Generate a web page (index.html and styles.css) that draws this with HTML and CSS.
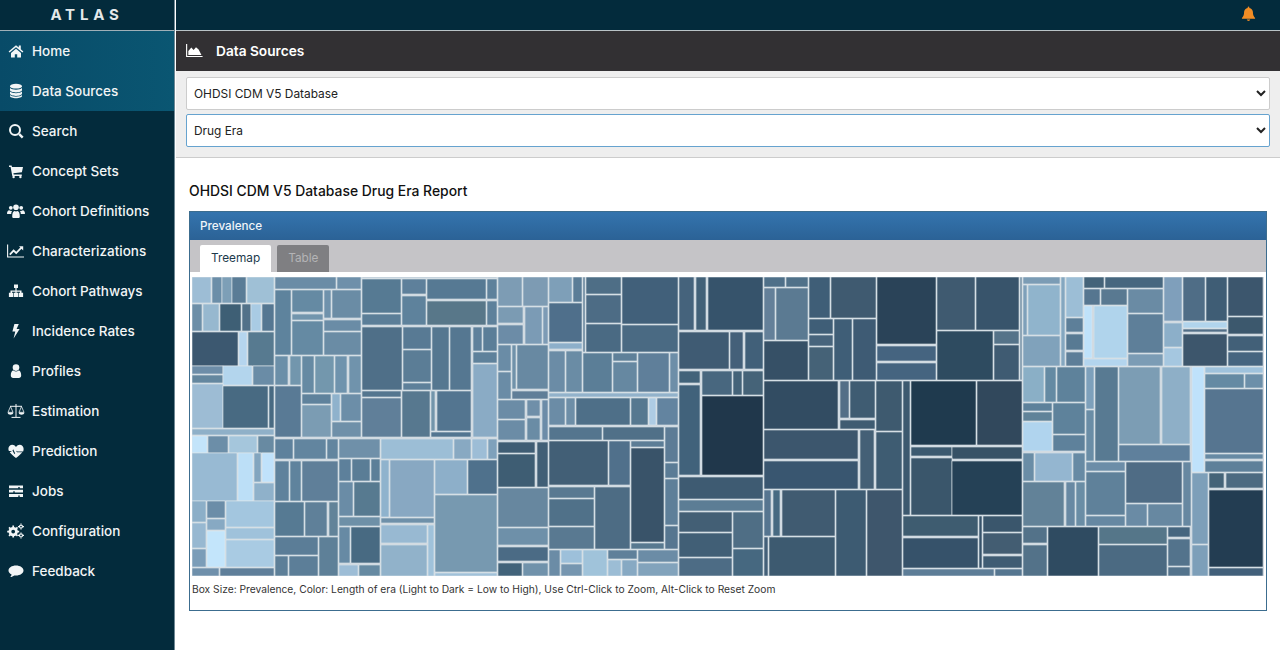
FILE: index.html
```html
<!DOCTYPE html>
<html lang="en">
<head>
    <meta charset="UTF-8">
    <meta name="viewport" content="width=device-width, initial-scale=1.0">
    <link rel="stylesheet" href="styles.css">
    <title>ATLAS</title>
</head>
<body>
    <aside class="sidebar">
        <div class="brand">ATLAS</div>
        <nav class="nav">
            <a class="nav-item active">
                <svg class="nav-icon" viewBox="0 0 16 16"><path d="M8 2.200 .6 8.400l1 1.100L8 4.200l6.400 5.300 1-1.100-2.600-2.200V2.600h-2v2zM3 10v4.600h3.800v-3.400h2.400v3.400H13V10L8 5.800z"/></svg>
                <span>Home</span>
            </a>
            <a class="nav-item active">
                <svg class="nav-icon" viewBox="0 0 16 16"><ellipse cx="8" cy="3.200" rx="6" ry="2.400"/><path d="M2 5v2c0 1.300 2.700 2.400 6 2.400s6-1.100 6-2.400V5c-1.200 1.200-3.500 1.700-6 1.700S3.200 6.200 2 5zM2 8.600v2c0 1.300 2.700 2.400 6 2.400s6-1.100 6-2.400v-2c-1.200 1.200-3.500 1.700-6 1.700s-4.800-.5-6-1.700zM2 12.100v1c0 1.300 2.700 2.200 6 2.200s6-.9 6-2.200v-1c-1.200 1.200-3.500 1.700-6 1.700s-4.800-.5-6-1.700z"/></svg>
                <span>Data Sources</span>
            </a>
            <a class="nav-item">
                <svg class="nav-icon" viewBox="0 0 16 16"><path class="line" d="M11.200 11.200 14.700 14.700" stroke-width="2.400"/><circle class="line" cx="7" cy="7" r="5" stroke-width="2"/></svg>
                <span>Search</span>
            </a>
            <a class="nav-item">
                <svg class="nav-icon" viewBox="0 0 16 16"><path d="M1 2.500h2.600l.4 1.500H15l-1.100 5.300-8.500 1 .3 1.200h8.100v1.400H4.300L2.600 3.900H1z"/><circle cx="5.600" cy="14" r="1.200"/><circle cx="12.400" cy="14" r="1.200"/></svg>
                <span>Concept Sets</span>
            </a>
            <a class="nav-item">
                <svg class="nav-icon nav-icon-wide" viewBox="0 0 18 16"><circle cx="3.800" cy="4.800" r="1.900"/><circle cx="14.200" cy="4.800" r="1.900"/><circle cx="9" cy="4.300" r="2.800"/><path d="M0 10.500c0-2 1-3.300 2.200-3.300.8.700 2.100.9 3 .5-.7 1-1 2-1 3.300H1.300C.500 11 0 10.900 0 10.500zM18 10.500c0-2-1-3.300-2.200-3.300-.8.700-2.100.9-3 .5.700 1 1 2 1 3.300h2.900c.8 0 1.300-.1 1.300-.5zM5.200 13.500c0-3.300.9-5.400 2.400-5.400.9.600 1.900.6 2.800 0 1.500 0 2.400 2.100 2.400 5.400 0 1-.7 1.500-1.500 1.500H6.700c-.8 0-1.500-.5-1.500-1.500z"/></svg>
                <span>Cohort Definitions</span>
            </a>
            <a class="nav-item">
                <svg class="nav-icon nav-icon-wide" viewBox="0 0 18 16"><path class="line" d="M.6 1.500V14h16.400" stroke-width="1.100"/><path class="line" d="M2.800 11.600 6.600 7.600l2.600 2.400 5.200-5.400" stroke-width="1.800"/><path d="M12 3.200h4.200v4.200z"/></svg>
                <span>Characterizations</span>
            </a>
            <a class="nav-item">
                <svg class="nav-icon" viewBox="0 0 16 16"><path d="M6 1.500h4v3.600H8.600v2.300h4.900v2.300h1.600v4.200H10.600V9.700H12v-1H8.600v1H10v4.200H6V9.700h1.400v-1H4v1h1.400v4.200H.9V9.700h1.600V7.400h4.900V5.100H6z"/></svg>
                <span>Cohort Pathways</span>
            </a>
            <a class="nav-item">
                <svg class="nav-icon" viewBox="0 0 16 16"><path d="M6.400 1h4.400L8.600 6h3l-6 9.400 1.700-7H4.400z"/></svg>
                <span>Incidence Rates</span>
            </a>
            <a class="nav-item">
                <svg class="nav-icon" viewBox="0 0 16 16"><circle cx="8" cy="4.600" r="3.300"/><path d="M2.800 12.600c0-3 .9-5 2.700-5 .7.600 1.600 1 2.500 1s1.800-.4 2.500-1c1.800 0 2.700 2 2.700 5 0 1.500-1 2.400-2.300 2.400H5.100c-1.300 0-2.300-.9-2.300-2.400z"/></svg>
                <span>Profiles</span>
            </a>
            <a class="nav-item">
                <svg class="nav-icon nav-icon-wide" viewBox="0 0 18 16"><path class="line" d="M9 1v13M4.500 14.400h9M3 3.300h12" stroke-width="1"/><path class="line" d="M3.500 3.500 1 9.300h5zM14.500 3.500 12 9.300h5z" stroke-width=".8"/><path d="M.6 9.600h5.800C6.200 11 5 11.800 3.500 11.800S.8 11 .6 9.600zM11.600 9.600h5.800c-.2 1.400-1.400 2.200-2.900 2.200s-2.700-.8-2.900-2.200z"/></svg>
                <span>Estimation</span>
            </a>
            <a class="nav-item">
                <svg class="nav-icon" viewBox="0 0 16 16"><path d="M8 4C6.900 2.500 5.700 1.800 4.400 1.800 2 1.800.4 3.500.4 5.800c0 .8.200 1.500.5 2.200h3.400l.9-1.800 2 4.200 1.500-2.700.6.900h5.800c.3-.7.500-1.400.5-2.800 0-2.300-1.600-4-4-4C10.300 1.800 9.100 2.500 8 4zM1.700 9.200C3.400 11.100 5.700 13.300 8 15c2.300-1.700 4.600-3.900 6.300-5.800H9.100l-.9-1.300-1.800 3.300-2-4-.4.800z"/></svg>
                <span>Prediction</span>
            </a>
            <a class="nav-item">
                <svg class="nav-icon" viewBox="0 0 16 16"><path d="M1 2.500h14v2.800h-3.300V3.900h-1.400v1.400H1zM1 6.800h14v2.800H6.700V8.200H5.300v1.400H1zM1 11.100h14v2.800h-3.300v-1.400h-1.400v1.400H1z"/></svg>
                <span>Jobs</span>
            </a>
            <a class="nav-item">
                <svg class="nav-icon nav-icon-wide" viewBox="0 0 18 16"><circle class="line" cx="6.200" cy="8.600" r="3.300" stroke-width="2.800"/><path class="line" d="M6.200 2.600v2.200M6.200 12.400v2.200M.2 8.600h2.200M10 8.600h2.200M2 4.400l1.500 1.500M9 11.400l1.500 1.500M2 12.800l1.500-1.500M9 5.800l1.500-1.500" stroke-width="1.700"/><circle class="line" cx="14" cy="3.600" r="1.500" stroke-width="1.200"/><circle class="line" cx="14" cy="12.400" r="1.500" stroke-width="1.200"/><path class="line" d="M14 .6v1M14 5.600v1M11 3.600h1M16 3.600h1M14 9.400v1M14 14.400v1M11 12.400h1M16 12.400h1" stroke-width="1.200"/></svg>
                <span>Configuration</span>
            </a>
            <a class="nav-item">
                <svg class="nav-icon" viewBox="0 0 16 16"><path d="M8 2.500c4.200 0 7.500 2.200 7.500 5s-3.300 5-7.500 5c-.6 0-1.200 0-1.700-.1-1 .9-2.500 1.500-4 1.700.7-.8 1.200-1.700 1.300-2.600C1.700 10.600.5 9.100.5 7.500c0-2.800 3.300-5 7.500-5z"/></svg>
                <span>Feedback</span>
            </a>
        </nav>
    </aside>

    <div class="main">
        <header class="topbar">
            <svg class="bell" viewBox="0 0 16 16"><path d="M8 .6c.5 0 .9.400.9.900v.5c2.300.4 3.800 2.200 3.800 4.500 0 3.200.8 4.900 2.300 6.300v.7H1v-.7C2.500 11.400 3.300 9.700 3.300 6.500c0-2.300 1.500-4.100 3.800-4.500v-.5c0-.5.400-.9.900-.9zM6.200 14.500h3.600C9.700 15.400 8.900 16 8 16s-1.700-.6-1.800-1.500z"/></svg>
        </header>

        <div class="page-title">
            <svg class="page-icon" viewBox="0 0 18 16"><path class="line" d="M.6 1v13.400h17" stroke-width="1.200"/><path d="M2.400 12.800V8.400L5.600 4.800 8 7.400l2.600-2.800 2.800 2.400 3 5.800z"/></svg>
            <span>Data Sources</span>
        </div>

        <div class="filters">
            <select class="picker">
                <option>OHDSI CDM V5 Database</option>
            </select>
            <select class="picker picker-focus">
                <option>Drug Era</option>
            </select>
        </div>

        <div class="report">
            <h2 class="report-title">OHDSI CDM V5 Database Drug Era Report</h2>
            <section class="panel">
                <div class="panel-heading">Prevalence</div>
                <div class="tabs">
                    <a class="tab tab-on">Treemap</a>
                    <a class="tab tab-off">Table</a>
                </div>
                <div class="panel-body">
                    <svg id="treemap" class="treemap" viewBox="192 277 1072 299"></svg>
                    <p class="legend">Box Size: Prevalence, Color: Length of era (Light to Dark = Low to High), Use Ctrl-Click to Zoom, Alt-Click to Reset Zoom</p>
                </div>
            </section>
        </div>
    </div>
    <script src="treemap.js"></script>
</body>
</html>
```

FILE: styles.css
```css
* {
    box-sizing: border-box;
}
html, body {
    height: 100%;
}
body {
    margin: 0;
    display: flex;
    overflow: hidden;
    font-family: Inter, "Liberation Sans", sans-serif;
    font-size: 14px;
    color: #111;
    background-color: white;
}
.line {
    fill: none;
    stroke: currentColor;
}

.sidebar {
    flex: 0 0 175px;
    height: 100%;
    background-color: #032b3c;
    border-right: 1px solid #6f8894;
}
.brand {
    height: 31px;
    line-height: 29px;
    text-align: center;
    color: #e4e8ea;
    font-size: 15px;
    font-weight: 700;
    letter-spacing: 4.8px;
    border-bottom: 1px solid #9fb0b8;
}
.nav-item {
    display: flex;
    align-items: center;
    height: 40px;
    padding: 0 0 0 8px;
    color: #f2f5f6;
    font-weight: 500;
    font-size: 13.5px;
}
.nav-item span {
    line-height: 18px;
    margin-bottom: 1px;
}
.nav-item.active {
    background-image: linear-gradient(to right, #084b68, #0a5672);
}
.nav-icon {
    width: 16px;
    height: 16px;
    margin-right: 8px;
    fill: currentColor;
}
.nav-icon-wide {
    width: 18px;
    margin-left: -1px;
    margin-right: 7px;
}

.main {
    flex: 1;
    min-width: 0;
    margin-left: 1px;
    display: flex;
    flex-direction: column;
}
.topbar {
    height: 31px;
    display: flex;
    align-items: center;
    justify-content: flex-end;
    padding-right: 24px;
    background-color: #032b3c;
    border-bottom: 1px solid #b9c3c7;
}
.bell {
    width: 15px;
    height: 15px;
    margin-top: -3px;
    fill: #f28d25;
}
.page-title {
    height: 40px;
    display: flex;
    align-items: center;
    padding: 0 0 1px 10px;
    background-color: #323033;
    color: white;
    font-weight: 600;
    font-size: 13.7px;
}
.page-icon {
    width: 17px;
    height: 15px;
    margin-right: 13px;
    color: white;
    fill: white;
}
.filters {
    display: flex;
    flex-direction: column;
    gap: 4px;
    height: 87px;
    padding: 6px 10px 0 10px;
    background-color: #eeeeee;
    border-bottom: 1px solid #cccccc;
}
.picker {
    width: 100%;
    height: 33px;
    padding: 0 3px;
    font-family: Inter, "Liberation Sans", sans-serif;
    font-size: 11.9px;
    color: #222;
    background-color: white;
    border: 1px solid #cccccc;
    border-radius: 2px;
}
.picker-focus {
    border-color: #66a3cf;
}

.report {
    padding: 0 13px;
}
.report-title {
    margin: 24px 0 11px 0;
    line-height: 18px;
    font-size: 13.9px;
    font-weight: 500;
}
.panel {
    height: 400px;
    border: 1px solid #3c6d8f;
}
.panel-heading {
    height: 28px;
    line-height: 28px;
    padding-left: 10px;
    color: #f0f5f9;
    font-size: 11.7px;
    font-weight: 500;
    background-image: linear-gradient(to bottom, #3474ae, #2b6296);
}
.tabs {
    display: flex;
    gap: 6px;
    height: 32px;
    padding: 5px 0 0 10px;
    background-color: #c5c4c7;
}
.tab {
    height: 27px;
    line-height: 27px;
    padding: 0 11px;
    font-size: 11.8px;
    border-radius: 2px 2px 0 0;
}
.tab-on {
    background-color: white;
    color: #1c3a4c;
}
.tab-off {
    background-color: #7f7f82;
    color: #b4b4b6;
}
.panel-body {
    padding: 5px 0 0 2px;
}
.treemap {
    display: block;
    width: 1072px;
    height: 299px;
    background-color: #ccd6de;
}
.treemap rect {
    stroke: #dfe6ec;
    stroke-width: .6;
}
.legend {
    margin: 7px 0 0 0;
    line-height: 12px;
    font-size: 10.25px;
    color: #333;
}
```

FILE: treemap.js
```js
// x0, y0, x1, y1, colour (page pixels, same as the svg viewBox)
let cells = [
    // first block
    [192,277,211,303,"#9dbdd5"],[212,277,222,303,"#6b8ea8"],[222,277,232,303,"#7d9fb7"],[232,277,246,303,"#5a7c96"],[247,277,274,303,"#9fc0d6"],
    [192,304,202,331,"#6d8fa8"],[203,304,219,331,"#97b8cf"],[220,304,241,331,"#3e5f75"],[242,304,251,331,"#527189"],[251,304,261,331,"#a9cbe4"],[262,304,274,331,"#557792"],
    [192,332,238,366,"#3c5870"],[239,332,247,366,"#b5d5ee"],[248,332,274,366,"#577a90"],
    [192,366,223,374,"#6d8da8"],[192,375,223,383,"#64879f"],[223,366,252,385,"#b3d5ed"],[253,366,274,385,"#6a8ca6"],
    [192,384,223,428,"#9dbcd4"],[223,386,268,428,"#486a82"],[269,386,274,428,"#486a82"],[192,429,274,435,"#8fb0c8"],
    [192,436,207,453,"#c3e4fa"],[208,436,228,453,"#6c8ea8"],[229,436,257,453,"#a5c6dc"],[258,436,274,453,"#688aa2"],
    [192,453,237,501,"#98bad3"],[238,453,253,501,"#bcdff7"],[254,453,261,482,"#82a5bf"],[262,453,274,482,"#c0e2fb"],[254,483,274,501,"#8fb1ca"],
    [192,501,206,522,"#8cafc8"],[192,523,206,548,"#97b8d1"],[192,549,206,567,"#7b9db8"],[207,501,225,518,"#6b8da8"],[207,519,225,530,"#87a9c3"],[207,531,225,567,"#c3e5fb"],
    [226,501,274,527,"#a3c6df"],[226,528,274,539,"#9fc2db"],[226,540,274,567,"#a9cbe3"],[192,568,219,576,"#6f90ab"],[220,568,274,576,"#5f7f9a"],

    // second block
    [275,277,336,289,"#6a8ca6"],[337,277,361,289,"#6e90aa"],[275,290,291,355,"#5e839d"],[292,290,323,312,"#658aa3"],[292,314,323,320,"#7295ad"],[292,321,323,355,"#658aa3"],
    [324,290,331,318,"#6f92ac"],[332,290,361,318,"#6a8ca5"],[324,320,361,331,"#6a8ca6"],[324,332,361,355,"#6a8ca5"],
    [275,356,288,385,"#6b8fa8"],[290,356,301,385,"#7296ad"],[302,356,314,393,"#668aa3"],[315,356,334,393,"#7397ad"],[335,356,347,393,"#6f93ad"],[349,356,361,393,"#7093ac"],
    [275,386,301,437,"#597a95"],[302,394,331,404,"#5f829c"],[302,405,331,437,"#7b9cb3"],[332,394,340,421,"#8fb2cc"],[341,394,361,421,"#6c8ea8"],[332,422,361,437,"#6f90a9"],
    [275,439,293,459,"#5e819c"],[294,439,326,459,"#62859f"],[327,439,338,459,"#62859f"],[275,461,289,501,"#5f829c"],[290,461,301,501,"#5f839d"],[302,461,338,501,"#5f7f99"],
    [275,502,304,536,"#567a93"],[305,502,327,536,"#5f8099"],[329,502,338,536,"#628399"],[275,537,318,555,"#5b7d97"],[275,556,288,576,"#5d7f98"],[289,556,318,576,"#5c7e98"],[319,537,338,576,"#5e8098"],
    [339,439,380,458,"#6f90a9"],[339,459,351,481,"#5d809b"],[352,459,370,481,"#5a7d96"],[371,459,380,481,"#5c7f98"],[339,482,353,516,"#6a8ca6"],[354,482,380,516,"#577a90"],[339,517,380,526,"#6e90a7"],
    [339,527,350,563,"#678aa4"],[351,527,380,563,"#486a82"],[339,565,358,576,"#9dbdd6"],[359,565,380,576,"#668aa2"],
    [381,439,453,459,"#9cbed6"],[454,439,471,459,"#88a9c2"],[472,439,487,459,"#9dbdd6"],[488,439,497,459,"#7fa1bb"],[381,460,389,517,"#8fb3cd"],[390,460,434,517,"#88a8c2"],[381,518,434,523,"#6e90a9"],
    [381,525,427,543,"#98b9d2"],[381,545,427,576,"#91b2ca"],[428,525,434,576,"#a0c2da"],[435,460,467,494,"#8dafc9"],[468,460,497,494,"#4f718c"],[435,495,497,572,"#7799b0"],[435,573,497,576,"#a0c1d9"],

    // third block
    [362,277,497,278,"#9db4c6"],[362,279,401,313,"#567a93"],[362,314,401,325,"#5b7e98"],[402,279,426,294,"#5e809b"],[402,296,426,325,"#5e829c"],[427,279,486,299,"#567993"],[427,301,486,325,"#587789"],
    [487,279,497,299,"#5e819b"],[487,301,497,325,"#5e819b"],[362,327,402,390,"#4f6f88"],[403,327,431,349,"#587a94"],[403,350,431,382,"#5b7d96"],[403,383,431,390,"#5e809a"],
    [432,327,449,390,"#557790"],[450,327,471,390,"#557791"],[473,327,482,351,"#5e809b"],[483,327,497,351,"#5b7e98"],[473,352,497,363,"#5e819b"],[473,364,497,437,"#8aabc5"],
    [362,391,401,397,"#54768f"],[362,398,401,437,"#607f99"],[402,391,430,437,"#57788f"],[431,391,435,431,"#7295ab"],[437,391,471,431,"#537590"],[431,432,471,437,"#527590"],

    // fourth block
    [498,277,522,306,"#7d9cb4"],[523,277,548,306,"#7d9bb3"],[498,307,523,323,"#7b9bb3"],[498,325,523,344,"#6c8ca7"],[525,307,542,344,"#7b9bb5"],[543,307,548,344,"#7d9bb5"],
    [498,345,511,371,"#6a8ca6"],[498,372,511,399,"#6a8ca6"],[512,345,516,389,"#7092aa"],[517,345,548,389,"#6889a2"],[512,391,548,399,"#607e98"],
    [498,400,525,419,"#6b8ca6"],[527,400,540,416,"#6f8fa9"],[527,418,540,440,"#6a8ca5"],[542,400,548,440,"#6c8ca8"],[498,420,525,440,"#6b8ca6"],
    [498,442,535,453,"#3f5d74"],[537,442,548,487,"#415f76"],[498,454,535,487,"#3e5d73"],[498,488,548,527,"#67879f"],[498,528,548,545,"#6e90a9"],[498,547,548,561,"#4b6b85"],[498,563,522,576,"#42637a"],[523,563,548,576,"#7092ab"],

    // fifth block
    [549,277,572,302,"#7e9fb8"],[573,277,582,302,"#5b7d97"],[549,303,582,342,"#4f6f8b"],[549,343,582,349,"#8dafca"],[583,277,585,352,"#5a7b94"],
    [586,277,621,294,"#4e6e86"],[586,295,621,323,"#4d6c85"],[586,324,621,352,"#4a6a83"],[622,277,678,324,"#41607a"],[622,325,678,352,"#4a6a83"],
    [549,351,565,392,"#6b8ca6"],[566,351,582,392,"#6a8ca5"],[583,353,612,392,"#5b7e97"],[613,353,637,361,"#5f8099"],[613,362,637,392,"#6688a1"],[638,353,669,392,"#5f7f9a"],[670,353,678,392,"#6d8ea8"],[549,393,678,397,"#92b2cb"],
    [549,398,565,425,"#6b8ca6"],[566,398,575,425,"#6d8ea7"],[576,398,630,425,"#4e6f88"],[631,398,648,425,"#567890"],[649,398,656,425,"#aecce4"],[657,398,678,425,"#6384a0"],
    [549,427,602,440,"#54758e"],[603,427,664,440,"#507088"],[665,427,678,462,"#5d7c96"],[549,441,608,485,"#425f76"],[609,441,630,485,"#50708b"],[631,441,664,447,"#5c7d96"],[631,448,664,542,"#395369"],[631,543,664,549,"#587990"],
    [665,463,678,478,"#5b7c96"],[665,479,678,525,"#5e7f99"],[665,526,678,549,"#567690"],[549,487,594,498,"#597991"],[549,499,594,526,"#507189"],[549,527,594,549,"#597991"],[595,487,630,549,"#4d6c84"],
    [549,550,560,576,"#6b8ca6"],[561,550,582,563,"#9dc0da"],[561,564,582,576,"#7696b0"],[583,550,607,576,"#a0c3da"],[608,550,637,559,"#5f809a"],[608,560,621,576,"#9cbdd5"],[622,560,637,576,"#87a9c3"],[638,550,678,562,"#6b8ca6"],[638,563,678,576,"#82a3bc"],

    // sixth block
    [679,277,694,330,"#45637c"],[696,277,706,330,"#426178"],[708,277,763,330,"#36536b"],[679,332,729,369,"#3f5b73"],[730,332,743,369,"#446079"],[745,332,763,369,"#416079"],
    [679,371,700,383,"#42637a"],[679,385,700,475,"#41627b"],[702,371,732,395,"#48677f"],[733,371,742,395,"#446379"],[743,371,763,395,"#456378"],[702,396,763,475,"#20374b"],
    [679,477,763,499,"#3e5b72"],[679,500,763,511,"#5c7d95"],[679,512,732,532,"#435f75"],[679,533,732,557,"#415f76"],[679,558,732,576,"#4d6c85"],[733,512,763,548,"#4f6e85"],[733,549,763,576,"#466880"],

    // seventh block
    [764,277,785,287,"#4f7089"],[786,277,808,287,"#507189"],[764,288,775,340,"#648099"],[776,288,808,340,"#5b7a92"],[764,341,808,380,"#365066"],[809,277,830,318,"#3f5e77"],[831,277,876,318,"#3f5a70"],
    [809,319,833,334,"#3f5e77"],[809,335,833,346,"#47647c"],[809,347,833,380,"#456277"],[834,319,852,380,"#3f5e77"],[853,319,876,380,"#3e5b74"],[877,277,936,344,"#2a4358"],[877,346,936,361,"#456480"],[877,363,936,380,"#456480"],
    [937,277,975,330,"#3f5a70"],[976,277,1019,330,"#38546b"],[937,331,993,380,"#2e4b60"],[994,331,1019,344,"#557389"],[994,345,1019,380,"#3f5b72"],[1020,277,1022,380,"#6d8ba2"],
    [764,381,838,429,"#324c62"],[840,381,849,418,"#536f87"],[850,381,875,418,"#3f5c72"],[840,420,875,429,"#3f5c72"],[876,381,902,431,"#3e5a6f"],[903,381,910,515,"#3c596f"],[911,381,976,445,"#1f3a4e"],[977,381,1022,445,"#31485c"],
    [764,430,858,459,"#3c566d"],[764,461,858,489,"#395670"],[860,430,874,489,"#446076"],[876,432,902,489,"#3e5c72"],[764,490,771,536,"#567590"],[773,490,780,536,"#476a82"],[782,490,835,536,"#405b71"],
    [764,537,768,576,"#436079"],[769,537,835,576,"#3d5a70"],[836,490,866,576,"#3d5b72"],[867,490,902,576,"#3e566c"],
    [911,447,952,456,"#3c5a70"],[952,447,1022,459,"#375266"],[911,458,952,515,"#3a566b"],[952,461,1022,515,"#254156"],[903,516,978,536,"#3e5c70"],[903,538,978,568,"#36526a"],[979,516,982,568,"#36526a"],
    [983,516,1022,532,"#3a566c"],[983,533,1022,554,"#435d72"],[983,556,1022,568,"#3f5c73"],[903,569,994,576,"#5d7d97"],[995,569,1022,576,"#567690"],

    // last block
    [1023,277,1060,284,"#7b9cb5"],[1023,285,1027,335,"#7ea0ba"],[1028,285,1060,335,"#90b4cc"],[1023,336,1060,366,"#80a2bb"],[1061,277,1065,366,"#84a7c0"],
    [1066,277,1083,317,"#9cbed6"],[1066,318,1083,332,"#5d7f99"],[1066,334,1083,350,"#587a93"],[1066,352,1083,366,"#5d7e98"],
    [1084,277,1104,288,"#446379"],[1105,277,1163,288,"#47677f"],[1084,289,1100,305,"#567690"],[1101,289,1127,305,"#597991"],[1128,289,1163,313,"#6a8ba4"],[1128,314,1163,353,"#5e7f99"],[1128,354,1163,366,"#7b9cb5"],
    [1084,306,1092,358,"#bfe2fa"],[1094,306,1127,358,"#b0d4ec"],[1084,359,1127,366,"#b3d5ee"],[1164,277,1182,321,"#7f9fbb"],[1164,323,1182,347,"#8cafc9"],[1164,348,1182,366,"#a5c7e0"],
    [1183,277,1205,321,"#4f6d86"],[1206,277,1227,321,"#3f5d75"],[1183,322,1227,328,"#b1d4ec"],[1183,329,1227,332,"#536f88"],[1183,334,1227,366,"#3d566c"],
    [1228,277,1263,316,"#3c566d"],[1228,317,1263,334,"#3c586d"],[1228,336,1263,351,"#426078"],[1228,352,1263,366,"#466580"],
    [1023,367,1044,402,"#8aafc6"],[1045,367,1056,402,"#648aa3"],[1057,367,1085,402,"#5e829b"],[1023,403,1052,411,"#5d819b"],[1023,412,1052,421,"#608399"],[1023,422,1052,451,"#b0d4ee"],[1053,403,1085,434,"#5e829b"],[1053,435,1085,451,"#5e819b"],
    [1086,367,1094,409,"#7da0bb"],[1086,410,1094,461,"#6a8da6"],[1095,367,1118,461,"#587a92"],[1119,367,1160,444,"#7c9db4"],[1162,367,1190,444,"#8eafc7"],[1192,367,1204,472,"#bfe2fb"],
    [1205,367,1263,373,"#9fc2dc"],[1205,374,1244,388,"#658aa3"],[1245,374,1263,388,"#6c8fa9"],[1205,389,1263,453,"#567590"],[1205,454,1263,459,"#678aa4"],[1205,461,1263,472,"#5e809a"],[1119,445,1190,461,"#5f809c"],
    [1023,453,1034,481,"#6a8da6"],[1035,453,1072,481,"#94b6d0"],[1073,453,1085,481,"#678aa4"],[1023,482,1064,526,"#628298"],[1066,482,1075,526,"#6889a3"],[1076,482,1085,526,"#6a8da5"],
    [1086,462,1125,471,"#6c8da8"],[1086,472,1125,515,"#5f819a"],[1086,516,1125,526,"#6688a2"],[1126,462,1182,503,"#4f6c85"],[1126,504,1147,526,"#6a8ba5"],[1148,504,1182,526,"#6788a1"],[1183,462,1191,526,"#6788a1"],
    [1192,473,1208,544,"#7d9fb9"],[1192,545,1208,576,"#7d9fb9"],[1209,473,1224,488,"#446378"],[1226,473,1263,488,"#4c6a81"],[1209,490,1263,567,"#233d52"],[1209,568,1263,576,"#42607a"],
    [1023,527,1047,543,"#537289"],[1023,545,1047,576,"#537289"],[1048,527,1098,576,"#2f4b61"],[1099,527,1167,544,"#557689"],[1099,545,1167,576,"#4b6a82"],[1168,527,1190,537,"#46667f"],[1168,539,1190,566,"#53738c"],[1168,567,1190,576,"#53738c"]
];

let treemap = document.getElementById("treemap");
for (let i = 0; i < cells.length; i++) {
    let c = cells[i];
    let rect = document.createElementNS("http://www.w3.org/2000/svg", "rect");
    rect.setAttribute("x", c[0]);
    rect.setAttribute("y", c[1]);
    rect.setAttribute("width", c[2] - c[0]);
    rect.setAttribute("height", c[3] - c[1]);
    rect.setAttribute("fill", c[4]);
    treemap.appendChild(rect);
}
```
